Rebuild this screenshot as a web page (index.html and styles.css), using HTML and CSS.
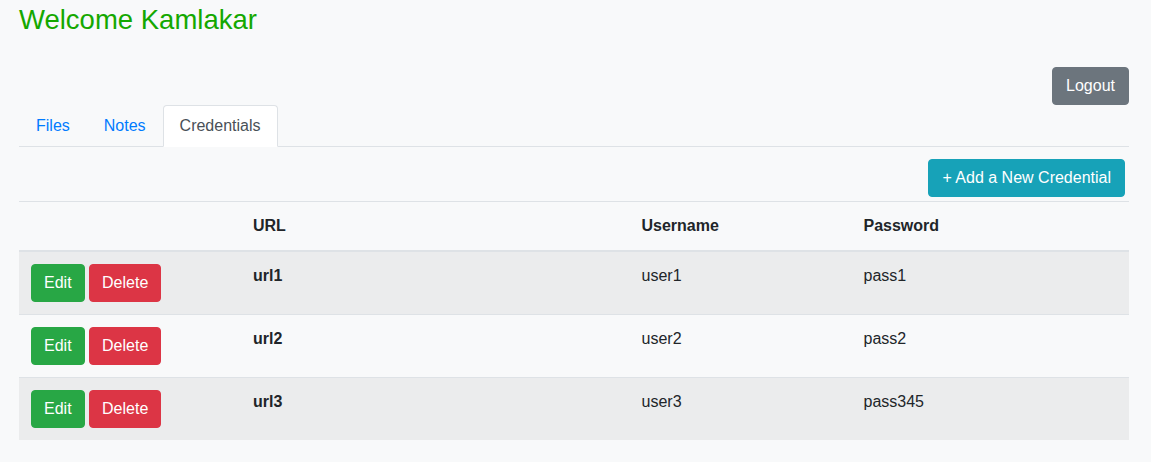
FILE: index.html
```html
<!DOCTYPE html>
<html>
<head>
<meta charset="utf-8">
<link rel="stylesheet" href="styles.css">
</head>
<body>
<div class="container">
  <h3 class="welcome">Welcome Kamlakar</h3>
  <div class="logout-bar">
    <button class="btn btn-secondary btn-wide">Logout</button>
  </div>
  <ul class="nav-tabs">
    <li><a class="nav-link">Files</a></li>
    <li><a class="nav-link">Notes</a></li>
    <li><a class="nav-link active">Credentials</a></li>
  </ul>
  <div class="tab-content">
    <div class="add-bar">
      <button class="btn btn-info btn-wide">+ Add a New Credential</button>
    </div>
    <table class="table">
      <thead>
        <tr>
          <th class="c1"></th>
          <th class="c2">URL</th>
          <th class="c3">Username</th>
          <th class="c4">Password</th>
        </tr>
      </thead>
      <tbody>
        <tr class="odd">
          <td><button class="btn btn-success">Edit</button> <button class="btn btn-danger">Delete</button></td>
          <th>url1</th>
          <td>user1</td>
          <td>pass1</td>
        </tr>
        <tr>
          <td><button class="btn btn-success">Edit</button> <button class="btn btn-danger">Delete</button></td>
          <th>url2</th>
          <td>user2</td>
          <td>pass2</td>
        </tr>
        <tr class="odd">
          <td><button class="btn btn-success">Edit</button> <button class="btn btn-danger">Delete</button></td>
          <th>url3</th>
          <td>user3</td>
          <td>pass345</td>
        </tr>
      </tbody>
    </table>
  </div>
</div>
</body>
</html>
```

FILE: styles.css
```css
* { box-sizing: border-box; }
html, body {
  margin: 0;
  background: #f8f9fa;
  font-family: "Liberation Sans", Arial, sans-serif;
  font-size: 16px;
  line-height: 1.5;
  color: #212529;
}
.container {
  padding: 3px 22px 0 19px;
}
.welcome {
  margin: 0;
  font-size: 27.5px;
  font-weight: 400;
  line-height: 34px;
  color: #14a800;
}
.logout-bar {
  display: flex;
  justify-content: flex-end;
  margin-top: 30px;
}
.btn {
  display: inline-block;
  font-family: inherit;
  font-size: 16px;
  line-height: 24px;
  padding: 6px 12px;
  border: 1px solid transparent;
  border-radius: 4px;
  color: #fff;
  cursor: pointer;
  vertical-align: middle;
}
.btn-wide { padding: 6px 13px; }
.btn-secondary { background: #6c757d; border-color: #6c757d; }
.btn-info { background: #17a2b8; border-color: #17a2b8; }
.btn-success { background: #28a745; border-color: #28a745; }
.btn-danger { background: #dc3545; border-color: #dc3545; }
.nav-tabs {
  display: flex;
  list-style: none;
  margin: 0;
  padding: 0;
  border-bottom: 1px solid #dee2e6;
}
.nav-tabs li { margin-bottom: -1px; }
.nav-link {
  display: block;
  padding: 8px 16px;
  border: 1px solid transparent;
  border-top-left-radius: 4px;
  border-top-right-radius: 4px;
  color: #007bff;
  text-decoration: none;
}
.nav-link.active {
  color: #495057;
  background: #fff;
  border-color: #dee2e6 #dee2e6 #fff;
}
.tab-content {
  padding-top: 8px;
}
.add-bar {
  display: flex;
  justify-content: flex-end;
}
.add-bar .btn { margin: 4px; }
.table {
  width: 100%;
  border-collapse: collapse;
  margin-bottom: 16px;
}
.table th, .table td {
  padding: 12px;
  text-align: left;
  vertical-align: top;
  border-top: 1px solid #dee2e6;
}
.table thead th {
  vertical-align: bottom;
  border-bottom: 2px solid #dee2e6;
  font-weight: 700;
}
.table tbody th { font-weight: 700; }
.table tbody tr.odd { background: rgba(0, 0, 0, 0.05); }
.c1 { width: 20%; }
.c2 { width: 35%; }
.c3 { width: 20%; }
.c4 { width: 25%; }
```
